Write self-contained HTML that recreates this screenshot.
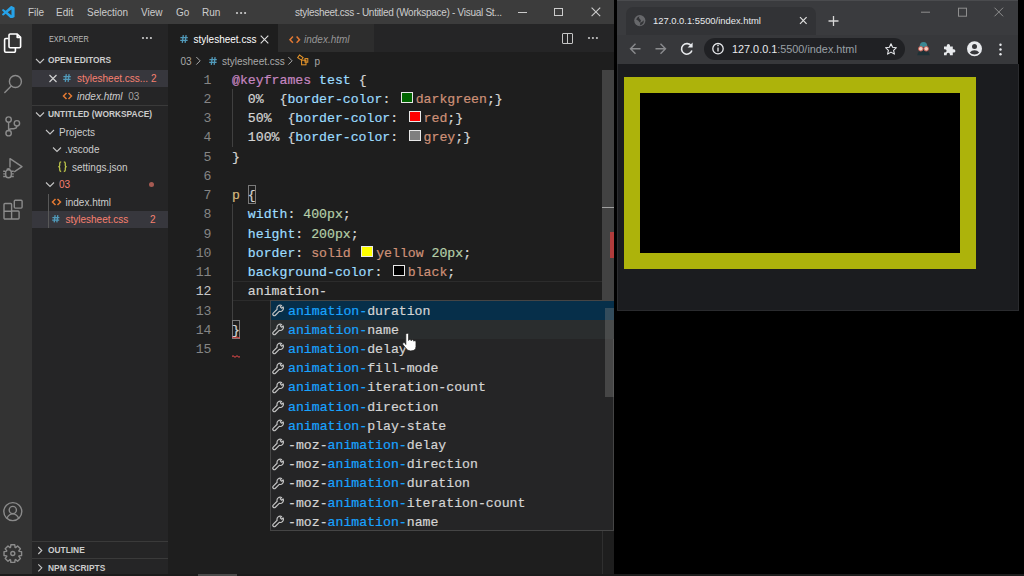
<!DOCTYPE html>
<html><head><meta charset="utf-8">
<style>
*{margin:0;padding:0;box-sizing:border-box}
html,body{width:1024px;height:576px;overflow:hidden;background:#000;font-family:"Liberation Sans",sans-serif}
.a{position:absolute}
.t{position:absolute;white-space:pre}
#title{left:0;top:0;width:614px;height:24px;background:#3c3c3c}
#act{left:0;top:24px;width:32px;height:552px;background:#333333}
#side{left:32px;top:24px;width:136px;height:552px;background:#252526}
#ed{left:168px;top:24px;width:446px;height:552px;background:#1e1e1e}
.menu{font-size:10px;color:#cccccc;top:7px;height:12px;line-height:12px}
.sb{font-size:10px;color:#cccccc;height:18px;line-height:18px}
.hd{font-size:8.4px;font-weight:bold;color:#cccccc;height:18px;line-height:18px}
.code{-webkit-text-stroke:0.2px currentColor;font-family:"Liberation Mono",monospace;font-size:13.2px;height:19.25px;line-height:19.25px;color:#d4d4d4}
.ln{font-family:"Liberation Mono",monospace;font-size:13.2px;height:19.25px;line-height:19.25px;color:#858585;text-align:right;width:40px}
.kw{color:#c586c0}.pr{color:#9cdcfe}.vl{color:#ce9178}.nm{color:#b5cea8}.sel{color:#d7ba7d}
.sw{display:inline-block;width:12px;height:11px;border:1.5px solid #e8e8e8;vertical-align:0.3px;margin:0 3px 0 2.5px}
.sug{-webkit-text-stroke:0.2px currentColor;font-family:"Liberation Mono",monospace;font-size:13.2px;height:19.2px;line-height:19.2px;color:#d4d4d4}
.hl{color:#18a3ff}
</style></head><body>
<!-- TITLE BAR -->
<div id="title" class="a"></div>
<svg class="a" style="left:2px;top:5.8px" width="12.6" height="12.6" viewBox="0 0 100 100"><path fill="#26a2e8" d="M96.46 10.8L75.86 0.87a6.23 6.23 0 0 0-7.1 1.2L29.35 38.04 12.19 25.01a4.16 4.16 0 0 0-5.32 0.24L1.36 30.26a4.17 4.17 0 0 0 0 6.16L16.25 50 1.36 63.58a4.17 4.17 0 0 0 0 6.16l5.51 5.01a4.16 4.16 0 0 0 5.32 0.24l17.16-13.03 39.41 35.96a6.23 6.23 0 0 0 7.1 1.2l20.6-9.92a6.25 6.25 0 0 0 3.54-5.63V16.43a6.25 6.25 0 0 0-3.54-5.63zM75.02 72.7L45.11 50l29.91-22.7z"/></svg>
<div class="t menu" style="left:28px">File</div>
<div class="t menu" style="left:56px">Edit</div>
<div class="t menu" style="left:87px">Selection</div>
<div class="t menu" style="left:141px">View</div>
<div class="t menu" style="left:176px">Go</div>
<div class="t menu" style="left:202px">Run</div>
<svg class="a" style="left:233.9px;top:9.9px" width="14.099999999999994" height="6"><circle cx="3.00" cy="3" r="1.1" fill="#cccccc"/><circle cx="7.10" cy="3" r="1.1" fill="#cccccc"/><circle cx="11.10" cy="3" r="1.1" fill="#cccccc"/></svg>
<div class="t menu" style="left:295px;letter-spacing:-0.28px">stylesheet.css - Untitled (Workspace) - Visual St...</div>
<div class="a" style="left:518px;top:12px;width:9px;height:1px;background:#cccccc"></div>
<div class="a" style="left:554.2px;top:8px;width:8.6px;height:8px;border:1px solid #cccccc"></div>
<svg class="a" style="left:590.5px;top:7.4px" width="10" height="10" viewBox="0 0 10 10"><path d="M0.6 0.6L9.2 9.2M9.2 0.6L0.6 9.2" stroke="#cccccc" stroke-width="1.1"/></svg>

<!-- ACTIVITY BAR -->
<div id="act" class="a"></div>
<svg class="a" style="left:0;top:24px" width="32" height="552" viewBox="0 24 32 552" fill="none" stroke-linejoin="round">
 <g stroke="#ffffff" stroke-width="1.6">
  <path d="M8.4 38.5H5.8a1.2 1.2 0 0 0-1.2 1.2v11.4a1.2 1.2 0 0 0 1.2 1.2h8.4a1.2 1.2 0 0 0 1.2-1.2V48"/>
  <path d="M10.2 34h7l3.4 3.4v9.2a1.2 1.2 0 0 1-1.2 1.2h-9.2a1.2 1.2 0 0 1-1.2-1.2V35.2a1.2 1.2 0 0 1 1.2-1.2z"/>
  <path d="M17.2 34v3.4h3.4"/>
 </g>
 <g stroke="#8b8b8b" stroke-width="1.4">
  <circle cx="15.4" cy="81.5" r="6"/>
  <path d="M11 86.2L4.8 92.6" stroke-linecap="round"/>
  <circle cx="8.6" cy="119.6" r="2.7"/>
  <circle cx="16.9" cy="123.3" r="2.7"/>
  <circle cx="8.6" cy="133.2" r="2.7"/>
  <path d="M8.6 122.3V130.5M16.9 126q0 2.4-3.2 2.8h-2.2q-2.9 0.3-2.9 2.5"/>
  <path d="M10 167.5V158.6L22 166.6L14.2 171.8"/>
  <path d="M5.7 172.6a2.8 2.8 0 0 1 5.6 0v2.4a2.8 2.8 0 0 1-5.6 0z M6.9 170.4a1.6 1.6 0 0 1 3.2 0 M3.2 171.3h2.2 M11.6 171.3h2.2 M3.2 173.9h2.2 M11.6 173.9h2.2 M3.2 176.5h2.2 M11.6 176.5h2.2"/>
  <rect x="14.3" y="200.3" width="7.8" height="7.8" rx="1"/>
  <path d="M4 204.5a1 1 0 0 1 1-1h5.6a1 1 0 0 1 1 1V211h6.5a1 1 0 0 1 1 1v6a1 1 0 0 1-1 1H5a1 1 0 0 1-1-1zM4 211.2h7.6V219"/>
  <circle cx="12.8" cy="511.6" r="9"/>
  <circle cx="12.8" cy="510" r="3.6"/>
  <path d="M6.8 518.5q2.2-4.6 6-4.6t6 4.6"/>
  <circle cx="12.8" cy="553.5" r="2"/>
 </g>
 <path stroke="#8b8b8b" stroke-width="1.4" d="M10.54 547.40 L10.84 544.82 L14.76 544.82 L15.06 547.40 L15.58 547.62 L17.62 546.00 L20.40 548.78 L18.78 550.82 L19.00 551.34 L21.58 551.64 L21.58 555.56 L19.00 555.86 L18.78 556.38 L20.40 558.42 L17.62 561.20 L15.58 559.58 L15.06 559.80 L14.76 562.38 L10.84 562.38 L10.54 559.80 L10.02 559.58 L7.98 561.20 L5.20 558.42 L6.82 556.38 L6.60 555.86 L4.02 555.56 L4.02 551.64 L6.60 551.34 L6.82 550.82 L5.20 548.78 L7.98 546.00 L10.02 547.62Z"/>
</svg>

<!-- SIDEBAR -->
<div id="side" class="a"></div>
<div class="t" style="left:48.5px;top:32.5px;height:12px;line-height:12px;font-size:8.8px;color:#bbbbbb;transform:scaleX(0.83);transform-origin:0 0">EXPLORER</div>
<svg class="a" style="left:140.1px;top:34.6px" width="13.900000000000006" height="6"><circle cx="3.00" cy="3" r="1.1" fill="#cccccc"/><circle cx="6.90" cy="3" r="1.1" fill="#cccccc"/><circle cx="10.90" cy="3" r="1.1" fill="#cccccc"/></svg>
<div class="a" style="left:32px;top:69.5px;width:136px;height:17.6px;background:#37373d"></div>
<div class="a" style="left:32px;top:210.7px;width:136px;height:17.5px;background:#37373d"></div>
<div class="a" style="left:32px;top:104.5px;width:136px;height:1px;background:#3a3a3a"></div>
<div class="a" style="left:32px;top:541.2px;width:136px;height:1px;background:#3a3a3a"></div>
<div class="a" style="left:32px;top:558.1px;width:136px;height:1px;background:#3a3a3a"></div>
<div class="a" style="left:48px;top:193.6px;width:1px;height:34.6px;background:#585858"></div>
<!-- chevrons etc -->
<svg class="a" style="left:32px;top:24px" width="136" height="552" viewBox="32 24 136 552" fill="none" stroke-width="1.1">
 <g stroke="#c5c5c5">
  <path d="M36 59l4 4 4-4"/>
  <path d="M36 112.5l4 4 4-4"/>
  <path d="M46 130l4 4 4-4"/>
  <path d="M53 147.5l4 4 4-4"/>
  <path d="M46 182.5l4 4 4-4"/>
  <path d="M38.3 547l3.5 3.5-3.5 3.5"/>
  <path d="M38.3 564.3l3.5 3.5-3.5 3.5"/>
  <path d="M49.5 75l7 7M56.5 75l-7 7" stroke="#d0d0d0" stroke-width="1.2"/>
 </g>
</svg>
<div class="t hd" style="left:48px;top:51.3px">OPEN EDITORS</div>
<svg class="a" style="left:63.3px;top:74.2px" width="8" height="8" viewBox="0 0 8 8" fill="none" stroke="#519aba" stroke-width="1.30"><path d="M3.3 0.2L2.3 7.8M6.1 0.2L5.1 7.8M0.4 2.7H7.8M0.2 5.3H7.6"/></svg>
<div class="t sb" style="left:77px;top:70.3px;color:#f88070">stylesheet.css... 2</div>

<div class="t sb" style="left:77px;top:88.0px;font-style:italic">index.html</div>
<div class="t sb" style="left:128.3px;top:88.0px;color:#a0a0a0">03</div>
<div class="t hd" style="left:48px;top:104.8px">UNTITLED (WORKSPACE)</div>
<div class="t sb" style="left:59px;top:123.6px">Projects</div>
<div class="t sb" style="left:65px;top:141.2px">.vscode</div>

<div class="t sb" style="left:72px;top:158.8px">settings.json</div>
<div class="t sb" style="left:59px;top:176.3px;color:#f88070">03</div>
<div class="a" style="left:148.7px;top:181.7px;width:5.6px;height:5.6px;border-radius:50%;background:#a65a52"></div>

<div class="t sb" style="left:65.5px;top:193.9px">index.html</div>
<svg class="a" style="left:52.2px;top:215.2px" width="7.6" height="7.6" viewBox="0 0 8 8" fill="none" stroke="#519aba" stroke-width="1.37"><path d="M3.3 0.2L2.3 7.8M6.1 0.2L5.1 7.8M0.4 2.7H7.8M0.2 5.3H7.6"/></svg>
<div class="t sb" style="left:65.5px;top:211.4px;color:#f88070">stylesheet.css</div>
<div class="t sb" style="left:150px;top:211.4px;color:#f88070">2</div>
<svg class="a" style="left:32px;top:24px" width="136" height="552" viewBox="32 24 136 552" fill="none">
 <path d="M66.5 93l-3 3 3 3M68.5 93l3 3-3 3" stroke="#e37933" stroke-width="1.5"/>
 <path d="M55.5 199l-3 3 3 3M57.5 199l3 3-3 3" stroke="#e37933" stroke-width="1.5"/>
 <path d="M61.2 161.9q-1.5 0-1.5 1.4v2.1q0 1.2-1.4 1.3q1.4 0.1 1.4 1.3v2.1q0 1.4 1.5 1.4M63.8 161.9q1.5 0 1.5 1.4v2.1q0 1.2 1.4 1.3q-1.4 0.1-1.4 1.3v2.1q0 1.4-1.5 1.4" stroke="#b8c048" stroke-width="1.3"/>
</svg>
<div class="t hd" style="left:48px;top:541.1px">OUTLINE</div>
<div class="t hd" style="left:48px;top:558.8px">NPM SCRIPTS</div>

<!-- EDITOR -->
<div id="ed" class="a"></div>
<div class="a" style="left:168px;top:24px;width:446px;height:27.5px;background:#252526"></div>
<div class="a" style="left:168px;top:24px;width:110px;height:27.5px;background:#1e1e1e"></div>
<div class="a" style="left:278px;top:24px;width:95.5px;height:27.5px;background:#2d2d2d"></div>
<svg class="a" style="left:180px;top:34.5px" width="8" height="8" viewBox="0 0 8 8" fill="none" stroke="#519aba" stroke-width="1.30"><path d="M3.3 0.2L2.3 7.8M6.1 0.2L5.1 7.8M0.4 2.7H7.8M0.2 5.3H7.6"/></svg>
<div class="t sb" style="left:193.6px;top:30.6px;color:#ffffff">stylesheet.css</div>
<svg class="a" style="left:260px;top:35px" width="9" height="9" viewBox="0 0 9 9"><path d="M0.7 0.7L8.3 8.3M8.3 0.7L0.7 8.3" stroke="#e0e0e0" stroke-width="1.1"/></svg>
<svg class="a" style="left:288px;top:34px" width="14" height="12" viewBox="0 0 14 12" fill="none"><path d="M4.9 2.6l-2.9 3.1 2.9 3.1M8.6 2.6l2.9 3.1-2.9 3.1" stroke="#e37933" stroke-width="1.5"/></svg>
<div class="t sb" style="left:304px;top:30.6px;color:#969696;font-style:italic">index.html</div>
<div class="a" style="left:562px;top:33px;width:11px;height:11px;border:1.1px solid #c5c5c5;border-radius:1px"></div>
<div class="a" style="left:567px;top:33px;width:1.1px;height:11px;background:#c5c5c5"></div>
<svg class="a" style="left:585.9px;top:35.3px" width="13.899999999999977" height="6"><circle cx="3.00" cy="3" r="1.1" fill="#c5c5c5"/><circle cx="6.90" cy="3" r="1.1" fill="#c5c5c5"/><circle cx="10.90" cy="3" r="1.1" fill="#c5c5c5"/></svg>
<div class="t sb" style="left:180.5px;top:52.5px;color:#a9a9a9;font-size:10px">03</div>
<svg class="a" style="left:209px;top:57.3px" width="8" height="8" viewBox="0 0 8 8" fill="none" stroke="#519aba" stroke-width="1.30"><path d="M3.3 0.2L2.3 7.8M6.1 0.2L5.1 7.8M0.4 2.7H7.8M0.2 5.3H7.6"/></svg>
<div class="t sb" style="left:222px;top:52.5px;color:#a9a9a9;font-size:10px">stylesheet.css</div>
<div class="t sb" style="left:314.5px;top:52.5px;color:#a9a9a9;font-size:10px">p</div>
<svg class="a" style="left:168px;top:52px" width="150" height="18" viewBox="168 52 150 18" fill="none" stroke-width="1"><path d="M196.3 57l3.8 3.8-3.8 3.8M288.3 57l3.8 3.8-3.8 3.8" stroke="#a9a9a9"/><g stroke="#e8962a" stroke-width="1"><rect x="298.2" y="56" width="4.4" height="3.2" transform="rotate(35 300.4 57.6)"/><rect x="301.6" y="60.2" width="4.4" height="4.6"/><rect x="305" y="58.6" width="2.8" height="3.6"/></g></svg>
<div class="t ln" style="left:171.5px;top:70.60px;color:#858585">1</div>
<div class="t ln" style="left:171.5px;top:89.85px;color:#858585">2</div>
<div class="t ln" style="left:171.5px;top:109.10px;color:#858585">3</div>
<div class="t ln" style="left:171.5px;top:128.35px;color:#858585">4</div>
<div class="t ln" style="left:171.5px;top:147.60px;color:#858585">5</div>
<div class="t ln" style="left:171.5px;top:166.85px;color:#858585">6</div>
<div class="t ln" style="left:171.5px;top:186.10px;color:#858585">7</div>
<div class="t ln" style="left:171.5px;top:205.35px;color:#858585">8</div>
<div class="t ln" style="left:171.5px;top:224.60px;color:#858585">9</div>
<div class="t ln" style="left:171.5px;top:243.85px;color:#858585">10</div>
<div class="t ln" style="left:171.5px;top:263.10px;color:#858585">11</div>
<div class="t ln" style="left:171.5px;top:282.35px;color:#c6c6c6">12</div>
<div class="t ln" style="left:171.5px;top:301.60px;color:#858585">13</div>
<div class="t ln" style="left:171.5px;top:320.85px;color:#858585">14</div>
<div class="t ln" style="left:171.5px;top:340.10px;color:#858585">15</div>
<div class="a" style="left:232px;top:281.35px;width:370px;height:19.25px;border-top:1px solid #2c2c2c;border-bottom:1px solid #2c2c2c"></div>
<div class="a" style="left:232px;top:88.85px;width:1px;height:57.75px;background:#404040"></div>
<div class="a" style="left:232px;top:204.35px;width:1px;height:115.50px;background:#404040"></div>
<div class="a" style="left:247.8px;top:185.10px;width:8px;height:19.25px;border:1px solid #7a7a7a"></div>
<div class="a" style="left:232px;top:319.85px;width:8px;height:19.25px;border:1px solid #7a7a7a"></div>
<svg class="a" style="left:231px;top:335px" width="12" height="25" viewBox="231 335 12 25" fill="none" stroke="#f14c4c" stroke-width="1"><path d="M232 337.5q1 -1.2 2 0t2 0t2 0t2 0"/><path d="M232 356.5q1 -1.6 2 0t2 0t2 0t2 0"/></svg>
<div class="t code" style="left:232px;top:70.60px"><span class="kw">@keyframes</span> <span class="pr">test</span> {</div>
<div class="t code" style="left:232px;top:89.85px">  0%  {<span class="pr">border-color</span>: <span class="sw" style="background:#006400"></span><span class="vl">darkgreen</span>;}</div>
<div class="t code" style="left:232px;top:109.10px">  50%  {<span class="pr">border-color</span>: <span class="sw" style="background:#ff0000"></span><span class="vl">red</span>;}</div>
<div class="t code" style="left:232px;top:128.35px">  100% {<span class="pr">border-color</span>: <span class="sw" style="background:#808080"></span><span class="vl">grey</span>;}</div>
<div class="t code" style="left:232px;top:147.60px">}</div>
<div class="t code" style="left:232px;top:186.10px"><span class="sel">p</span> {</div>
<div class="t code" style="left:232px;top:205.35px">  <span class="pr">width</span>: <span class="nm">400px</span>;</div>
<div class="t code" style="left:232px;top:224.60px">  <span class="pr">height</span>: <span class="nm">200px</span>;</div>
<div class="t code" style="left:232px;top:243.85px">  <span class="pr">border</span>: <span class="vl">solid</span> <span class="sw" style="background:#ffff00"></span><span class="vl">yellow</span> <span class="nm">20px</span>;</div>
<div class="t code" style="left:232px;top:263.10px">  <span class="pr">background-color</span>: <span class="sw" style="background:#000000"></span><span class="vl">black</span>;</div>
<div class="t code" style="left:232px;top:282.35px">  animation-</div>
<div class="t code" style="left:232px;top:320.85px">}</div>
<div class="a" style="left:602px;top:69.5px;width:11.7px;height:460px;background:#424242"></div>
<div class="a" style="left:602px;top:206.5px;width:11.7px;height:1.2px;background:#a0a0a0"></div>
<div class="a" style="left:610px;top:231.5px;width:3.7px;height:26px;background:#b13c3c"></div>
<div class="a" style="left:602px;top:530px;width:1px;height:46px;background:#2f2f2f"></div>
<div class="a" style="left:197.5px;top:574px;width:39px;height:2px;background:#4a4a4a"></div>
<!-- SUGGEST -->
<div class="a" style="left:269.5px;top:300px;width:344px;height:230.5px;background:#252526;border:1px solid #454545"></div>
<div class="a" style="left:270.5px;top:300.8px;width:343px;height:18.9px;background:#062f4a"></div>
<div class="a" style="left:270.5px;top:319.7px;width:343px;height:19.3px;background:#2a2d2e"></div>
<svg class="a" style="left:271px;top:304.00px" width="14" height="14" viewBox="0 0 14 14"><path transform="translate(9.2 4.3) rotate(45)" d="M-1 -3.05V-1.1H1V-3.05A3.2 3.2 0 0 1 1.5 2.82V8.3A1.5 1.5 0 0 1 -1.5 8.3V2.82A3.2 3.2 0 0 1 -1 -3.05Z" fill="none" stroke="#c5c5c5" stroke-width="1.15" stroke-linejoin="round"/></svg>
<div class="t sug" style="left:288px;top:301.50px"><span class="hl">animation-</span>duration</div>
<svg class="a" style="left:271px;top:323.20px" width="14" height="14" viewBox="0 0 14 14"><path transform="translate(9.2 4.3) rotate(45)" d="M-1 -3.05V-1.1H1V-3.05A3.2 3.2 0 0 1 1.5 2.82V8.3A1.5 1.5 0 0 1 -1.5 8.3V2.82A3.2 3.2 0 0 1 -1 -3.05Z" fill="none" stroke="#c5c5c5" stroke-width="1.15" stroke-linejoin="round"/></svg>
<div class="t sug" style="left:288px;top:320.70px"><span class="hl">animation-</span>name</div>
<svg class="a" style="left:271px;top:342.40px" width="14" height="14" viewBox="0 0 14 14"><path transform="translate(9.2 4.3) rotate(45)" d="M-1 -3.05V-1.1H1V-3.05A3.2 3.2 0 0 1 1.5 2.82V8.3A1.5 1.5 0 0 1 -1.5 8.3V2.82A3.2 3.2 0 0 1 -1 -3.05Z" fill="none" stroke="#c5c5c5" stroke-width="1.15" stroke-linejoin="round"/></svg>
<div class="t sug" style="left:288px;top:339.90px"><span class="hl">animation-</span>delay</div>
<svg class="a" style="left:271px;top:361.60px" width="14" height="14" viewBox="0 0 14 14"><path transform="translate(9.2 4.3) rotate(45)" d="M-1 -3.05V-1.1H1V-3.05A3.2 3.2 0 0 1 1.5 2.82V8.3A1.5 1.5 0 0 1 -1.5 8.3V2.82A3.2 3.2 0 0 1 -1 -3.05Z" fill="none" stroke="#c5c5c5" stroke-width="1.15" stroke-linejoin="round"/></svg>
<div class="t sug" style="left:288px;top:359.10px"><span class="hl">animation-</span>fill-mode</div>
<svg class="a" style="left:271px;top:380.80px" width="14" height="14" viewBox="0 0 14 14"><path transform="translate(9.2 4.3) rotate(45)" d="M-1 -3.05V-1.1H1V-3.05A3.2 3.2 0 0 1 1.5 2.82V8.3A1.5 1.5 0 0 1 -1.5 8.3V2.82A3.2 3.2 0 0 1 -1 -3.05Z" fill="none" stroke="#c5c5c5" stroke-width="1.15" stroke-linejoin="round"/></svg>
<div class="t sug" style="left:288px;top:378.30px"><span class="hl">animation-</span>iteration-count</div>
<svg class="a" style="left:271px;top:400.00px" width="14" height="14" viewBox="0 0 14 14"><path transform="translate(9.2 4.3) rotate(45)" d="M-1 -3.05V-1.1H1V-3.05A3.2 3.2 0 0 1 1.5 2.82V8.3A1.5 1.5 0 0 1 -1.5 8.3V2.82A3.2 3.2 0 0 1 -1 -3.05Z" fill="none" stroke="#c5c5c5" stroke-width="1.15" stroke-linejoin="round"/></svg>
<div class="t sug" style="left:288px;top:397.50px"><span class="hl">animation-</span>direction</div>
<svg class="a" style="left:271px;top:419.20px" width="14" height="14" viewBox="0 0 14 14"><path transform="translate(9.2 4.3) rotate(45)" d="M-1 -3.05V-1.1H1V-3.05A3.2 3.2 0 0 1 1.5 2.82V8.3A1.5 1.5 0 0 1 -1.5 8.3V2.82A3.2 3.2 0 0 1 -1 -3.05Z" fill="none" stroke="#c5c5c5" stroke-width="1.15" stroke-linejoin="round"/></svg>
<div class="t sug" style="left:288px;top:416.70px"><span class="hl">animation-</span>play-state</div>
<svg class="a" style="left:271px;top:438.40px" width="14" height="14" viewBox="0 0 14 14"><path transform="translate(9.2 4.3) rotate(45)" d="M-1 -3.05V-1.1H1V-3.05A3.2 3.2 0 0 1 1.5 2.82V8.3A1.5 1.5 0 0 1 -1.5 8.3V2.82A3.2 3.2 0 0 1 -1 -3.05Z" fill="none" stroke="#c5c5c5" stroke-width="1.15" stroke-linejoin="round"/></svg>
<div class="t sug" style="left:288px;top:435.90px">-moz-<span class="hl">animation-</span>delay</div>
<svg class="a" style="left:271px;top:457.60px" width="14" height="14" viewBox="0 0 14 14"><path transform="translate(9.2 4.3) rotate(45)" d="M-1 -3.05V-1.1H1V-3.05A3.2 3.2 0 0 1 1.5 2.82V8.3A1.5 1.5 0 0 1 -1.5 8.3V2.82A3.2 3.2 0 0 1 -1 -3.05Z" fill="none" stroke="#c5c5c5" stroke-width="1.15" stroke-linejoin="round"/></svg>
<div class="t sug" style="left:288px;top:455.10px">-moz-<span class="hl">animation-</span>direction</div>
<svg class="a" style="left:271px;top:476.80px" width="14" height="14" viewBox="0 0 14 14"><path transform="translate(9.2 4.3) rotate(45)" d="M-1 -3.05V-1.1H1V-3.05A3.2 3.2 0 0 1 1.5 2.82V8.3A1.5 1.5 0 0 1 -1.5 8.3V2.82A3.2 3.2 0 0 1 -1 -3.05Z" fill="none" stroke="#c5c5c5" stroke-width="1.15" stroke-linejoin="round"/></svg>
<div class="t sug" style="left:288px;top:474.30px">-moz-<span class="hl">animation-</span>duration</div>
<svg class="a" style="left:271px;top:496.00px" width="14" height="14" viewBox="0 0 14 14"><path transform="translate(9.2 4.3) rotate(45)" d="M-1 -3.05V-1.1H1V-3.05A3.2 3.2 0 0 1 1.5 2.82V8.3A1.5 1.5 0 0 1 -1.5 8.3V2.82A3.2 3.2 0 0 1 -1 -3.05Z" fill="none" stroke="#c5c5c5" stroke-width="1.15" stroke-linejoin="round"/></svg>
<div class="t sug" style="left:288px;top:493.50px">-moz-<span class="hl">animation-</span>iteration-count</div>
<svg class="a" style="left:271px;top:515.20px" width="14" height="14" viewBox="0 0 14 14"><path transform="translate(9.2 4.3) rotate(45)" d="M-1 -3.05V-1.1H1V-3.05A3.2 3.2 0 0 1 1.5 2.82V8.3A1.5 1.5 0 0 1 -1.5 8.3V2.82A3.2 3.2 0 0 1 -1 -3.05Z" fill="none" stroke="#c5c5c5" stroke-width="1.15" stroke-linejoin="round"/></svg>
<div class="t sug" style="left:288px;top:512.70px">-moz-<span class="hl">animation-</span>name</div>
<div class="a" style="left:605px;top:308px;width:8.5px;height:89px;background:rgba(121,121,121,0.4)"></div>
<svg class="a" style="left:398px;top:330px" width="22" height="24" viewBox="398 330 22 24"><path d="M405.8 344.5V334.6a1.4 1.4 0 0 1 2.8 0V340.5a1.3 1.3 0 0 1 2.6 0.3a1.3 1.3 0 0 1 2.6 0.4a1.2 1.2 0 0 1 2.2 0.5V346.5q0 4.4-5 4.4h-0.8q-2.6 0-4.4-2.6l-3-3.8a1.4 1.4 0 0 1 2.2-1.6z" fill="#ffffff" stroke="#222" stroke-width="0.8"/></svg>
<!-- CHROME -->
<div class="a" style="left:617px;top:0;width:401px;height:311px;background:#3a3b3e"></div>
<div class="a" style="left:617px;top:0;width:401px;height:1px;background:#4a4b4e"></div>
<div class="a" style="left:626px;top:7.3px;width:190px;height:30px;background:#323336;border-radius:7px 7px 0 0"></div>
<div class="a" style="left:617px;top:35px;width:401px;height:29px;background:#37383b"></div>
<div class="a" style="left:704.4px;top:37.7px;width:200.9px;height:22.5px;background:#202124;border-radius:11.25px"></div>
<div class="a" style="left:617px;top:64px;width:401px;height:247px;background:#1b1c1f"></div>
<div class="a" style="left:617px;top:64px;width:1px;height:247px;background:#2c2d30"></div>
<div class="a" style="left:617px;top:310px;width:402px;height:1px;background:#2a2b2e"></div>
<div class="a" style="left:1018px;top:64px;width:1px;height:247px;background:#2a2b2e"></div>
<!-- page box -->
<div class="a" style="left:624px;top:77px;width:352px;height:192px;background:#000;border:16px solid #adb30b"></div>
<!-- tab -->
<svg class="a" style="left:617px;top:0" width="401" height="64" viewBox="617 0 401 64" fill="none">
 <circle cx="639.8" cy="20.6" r="5.6" fill="#67686b"/>
 <path d="M636.2 19.6q0.6-2.6 3.3-3.3q-1.3 1.6 0.3 2.6q1.9 1.1 0.9 2.6q-0.5 0.8-1.2 0.9q-0.5-1.7-3.3-2.8z" fill="#323336"/>
 <path d="M643.9 20.2q0 2.6-1.6 4.1q-1.2 1-2.6 1.2q1.1-1.5 0.3-2.7q1.7-0.6 3.9-2.6z" fill="#323336"/>
 <path d="M800 17.2l6.6 6.6M806.6 17.2l-6.6 6.6" stroke="#e0e0e0" stroke-width="1.2"/>
 <path d="M833.5 16v10M828.5 21h10" stroke="#d8d8d8" stroke-width="1.3"/>
 <path d="M921 12.2h9" stroke="#8e8e8e" stroke-width="1"/>
 <rect x="958.5" y="8.2" width="8" height="8" stroke="#8e8e8e" stroke-width="1"/>
 <path d="M994.5 7.7l8.6 8.6M1003.1 7.7l-8.6 8.6" stroke="#8e8e8e" stroke-width="1"/>
 <!-- back / fwd -->
 <path d="M640.5 48.7h-10M635.5 43.7l-5 5 5 5" stroke="#8a8b8e" stroke-width="1.4"/>
 <path d="M655.5 48.7h10M660.5 43.7l5 5-5 5" stroke="#8a8b8e" stroke-width="1.4"/>
 <!-- reload -->
 <path d="M691.3 46a5.3 5.3 0 1 0 0.6 4.5" stroke="#e8eaed" stroke-width="1.6"/>
 <path d="M692.6 42.6v5h-5z" fill="#e8eaed"/>
 <!-- info -->
 <circle cx="718" cy="48.7" r="5.2" stroke="#e8eaed" stroke-width="1.3"/>
 <path d="M718 47.5v4" stroke="#e8eaed" stroke-width="1.3"/>
 <circle cx="718" cy="45.6" r="0.8" fill="#e8eaed"/>
 <!-- star -->
 <path d="M891 43.8l1.6 3.5 3.8 0.4-2.8 2.6 0.8 3.8-3.4-2-3.4 2 0.8-3.8-2.8-2.6 3.8-0.4z" stroke="#e8eaed" stroke-width="1.1" stroke-linejoin="round"/>
 <!-- owl ext -->
 <path d="M919.6 47.2q0-5.2 3.9-5.2t3.9 5.2z" fill="#3b8893"/>
 <path d="M917.2 55.2q1.2-5.4 6.3-5.4t6.3 5.4z" fill="#1d3136"/>
 <circle cx="920.8" cy="48.8" r="2.3" fill="#f2cfc2" stroke="#c8584e" stroke-width="0.9"/>
 <circle cx="926.2" cy="48.8" r="2.3" fill="#f2cfc2" stroke="#c8584e" stroke-width="0.9"/>
 <!-- puzzle -->
 <path d="M944 46.5h2.8v-1a1.6 1.6 0 0 1 3.2 0v1h2.8v2.8h1a1.6 1.6 0 0 1 0 3.2h-1v2.8h-2.9v-1a1.6 1.6 0 0 0-3.2 0v1H944v-2.9h1a1.6 1.6 0 0 0 0-3.2h-1z" fill="#e8eaed"/>
 <!-- profile -->
 <circle cx="974.5" cy="48.8" r="7.5" fill="#e8eaed"/>
 <circle cx="974.5" cy="46.6" r="2.5" fill="#37383b"/>
 <path d="M969.8 52.6q1.7-2.4 4.7-2.4t4.7 2.4q-1.7 2-4.7 2t-4.7-2z" fill="#37383b"/>
 <!-- dots -->
 <circle cx="1000.5" cy="44.8" r="1.2" fill="#e8eaed"/>
 <circle cx="1000.5" cy="49.5" r="1.2" fill="#e8eaed"/>
 <circle cx="1000.5" cy="54.2" r="1.2" fill="#e8eaed"/>
</svg>
<div class="t" style="left:653px;top:15px;height:12px;line-height:12px;font-size:9.4px;color:#e8eaed">127.0.0.1:5500/index.html</div>
<div class="t" style="left:732px;top:42.5px;height:12px;line-height:12px;font-size:10.85px;color:#9aa0a6"><span style="color:#e8eaed">127.0.0.1</span>:5500/index.html</div>

<div class="a" style="left:0;top:574.4px;width:1024px;height:1.6px;background:#1b1b1b"></div>
<div class="a" style="left:197.5px;top:574.4px;width:39px;height:1.6px;background:#4a4a4a"></div>

</body></html>
